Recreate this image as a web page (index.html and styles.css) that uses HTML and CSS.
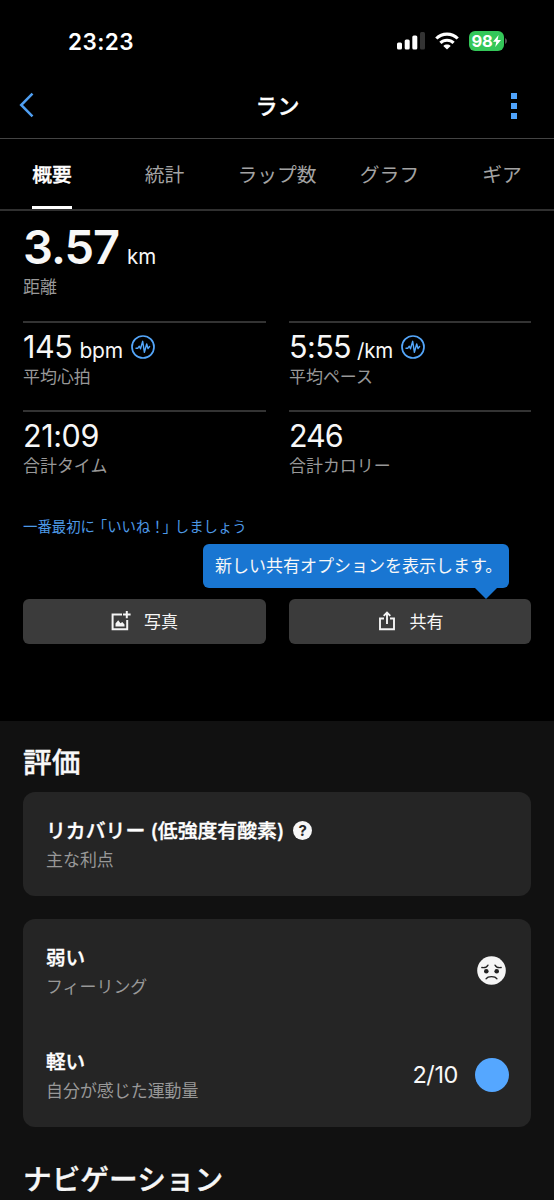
FILE: index.html
```html
<!DOCTYPE html>
<html lang="ja">
<head>
<meta charset="utf-8">
<title>ラン</title>
<link rel="stylesheet" href="styles.css">
</head>
<body>
<div class="app">
  <div class="status">
    <span class="time">23:23</span>
    <div class="status-icons">
      <svg width="28" height="18" viewBox="0 0 28 18"><g fill="#fff"><rect x="0" y="10.5" width="5" height="7" rx="1.5"/><rect x="7.7" y="7.5" width="5" height="10" rx="1.5"/><rect x="15.3" y="3.5" width="5" height="14" rx="1.5"/><rect x="23" y="0" width="5" height="17.5" rx="1.5" fill="#333"/></g></svg>
      <svg class="wifi" width="24" height="18" viewBox="0 0 24 18"><g fill="none" stroke="#fff" stroke-width="3.1"><path d="M1.3 6.5C7.1.6 16.9.6 22.7 6.5"/><path d="M5.4 10.9C9 7.4 15 7.4 18.6 10.9"/></g><path d="M12 17.6 8.3 13.9C10.3 12.1 13.7 12.1 15.7 13.9Z" fill="#fff"/></svg>
      <div class="battery"><span>98</span><svg width="8" height="12" viewBox="0 0 8 12"><path d="M5.6 0 0 6.8H3.3L2.2 12 8 5H4.6Z" fill="#fff"/></svg></div>
      <svg class="nub" width="2" height="6" viewBox="0 0 2 6"><path d="M0 0Q2 .8 2 3T0 6Z" fill="#555"/></svg>
    </div>
  </div>
  <header class="nav">
    <svg width="16" height="26" viewBox="0 0 16 26"><path d="M13.5 1.7 2.2 13 13.5 24.3" fill="none" stroke="#4f9ff2" stroke-width="2.5"/></svg>
    <h1>ラン</h1>
    <svg class="more" width="6" height="26" viewBox="0 0 6 26"><path d="M0 0h6v6H0zM0 10h6v6H0zM0 20h6v6H0z" fill="#4fa3fa"/></svg>
  </header>
  <nav class="tabs">
    <span class="tab active">概要</span><span class="tab">統計</span><span class="tab">ラップ数</span><span class="tab">グラフ</span><span class="tab">ギア</span>
  </nav>
  <main class="summary">
    <section class="distance">
      <div class="value big">3.57<span class="unit">km</span></div>
      <div class="label">距離</div>
    </section>
    <section class="stats">
      <div class="stat">
        <div class="value">145<span class="unit">bpm</span><svg class="pulse" width="24" height="24" viewBox="0 0 24 24"><g fill="none" stroke="#54a6fa"><circle cx="12" cy="12" r="11" stroke-width="1.7"/><path d="M5 13.3H6.7L8.3 11.2 9.5 13.8 11.7 6.3 13.4 17.3 15.7 9 17 13.6 18.6 11.5" stroke-width="1.4" stroke-linejoin="round" stroke-linecap="round"/></g></svg></div>
        <div class="label">平均心拍</div>
      </div>
      <div class="stat">
        <div class="value pace">5:55<span class="unit">/km</span><svg class="pulse" width="24" height="24" viewBox="0 0 24 24"><g fill="none" stroke="#54a6fa"><circle cx="12" cy="12" r="11" stroke-width="1.7"/><path d="M5 13.3H6.7L8.3 11.2 9.5 13.8 11.7 6.3 13.4 17.3 15.7 9 17 13.6 18.6 11.5" stroke-width="1.4" stroke-linejoin="round" stroke-linecap="round"/></g></svg></div>
        <div class="label">平均ペース</div>
      </div>
      <div class="stat">
        <div class="value">21:09</div>
        <div class="label">合計タイム</div>
      </div>
      <div class="stat">
        <div class="value calories">246</div>
        <div class="label">合計カロリー</div>
      </div>
    </section>
    <a class="like">一番最初<span class="tight">に</span>「いいね<span class="tight">！」</span>しましょう</a>
    <div class="actions">
      <div class="button">
        <svg width="20" height="20" viewBox="0 0 20 20"><path d="M11 3.5H1.6V18.3H16.2V9" fill="none" stroke="#f4f4f4" stroke-width="2"/><path d="M15.8 0V7.2M12 3.6H19.6" stroke="#f4f4f4" stroke-width="2"/><path d="M4.5 15.5V12.6L7.2 9.3 9.5 12.2 11.3 10.9 13.5 13.5V15.5Z" fill="#f4f4f4"/></svg>
        <span>写真</span>
      </div>
      <div class="button share">
        <svg width="16" height="20" viewBox="0 0 16 20"><path d="M5 7.5H1V18.2H15V7.5H11M8 13V2M4.7 4.9 8 1.6 11.3 4.9" fill="none" stroke="#f4f4f4" stroke-width="1.9"/></svg>
        <span>共有</span>
        <div class="tooltip">新しい共有オプションを表示します。</div>
      </div>
    </div>
  </main>
  <section class="rating">
    <h2>評価</h2>
    <div class="card">
      <div class="row">
        <div>
          <div class="title benefit">リカバリー (低強度有酸素)<span class="help">?</span></div>
          <div class="label">主な利点</div>
        </div>
      </div>
    </div>
    <div class="card">
      <div class="row">
        <div>
          <div class="title">弱い</div>
          <div class="label">フィーリング</div>
        </div>
        <svg class="face" width="29" height="29" viewBox="0 0 29 29"><circle cx="14.5" cy="14.5" r="14.3" fill="#f5f5f5"/><g fill="#222"><circle cx="9.3" cy="15.3" r="2.3"/><circle cx="19.7" cy="15.3" r="2.3"/></g><g fill="none" stroke="#222" stroke-width="1.3" stroke-linecap="round"><path d="M4.8 11.5C7.8 12 9.8 11.3 11 9.1M24.2 11.5C21.2 12 19.2 11.3 18 9.1"/><path d="M9 22.8C11 19.9 18 19.9 20 22.8"/></g></svg>
      </div>
      <div class="row">
        <div>
          <div class="title">軽い</div>
          <div class="label">自分が感じた運動量</div>
        </div>
        <div class="effort">2/10<span class="dot"></span></div>
      </div>
    </div>
    <h2 class="next">ナビゲーション</h2>
  </section>
</div>
</body>
</html>
```
FILE: styles.css
```css
* { box-sizing: border-box; }
html, body { margin: 0; background: #000; }
.app {
  width: 554px;
  height: 1200px;
  overflow: hidden;
  color: #f7f7f7;
  font-family: Inter, "Noto Sans CJK JP", sans-serif;
}
svg { display: block; flex: none; }
.status {
  display: flex;
  justify-content: space-between;
  height: 72px;
  padding: 26px 47px 0 68px;
}
.time { font-size: 22.5px; font-weight: 600; line-height: 31px; letter-spacing: .4px; color: #fff; }
.status-icons { display: flex; align-items: center; height: 30px; }
.wifi { margin-left: 10px; }
.battery {
  display: flex;
  align-items: center;
  justify-content: center;
  gap: 1px;
  width: 35px;
  height: 20px;
  margin-left: 10px;
  border-radius: 6px;
  background: #34c759;
  color: #fff;
  font-size: 16.5px;
  font-weight: 700;
  letter-spacing: -.3px;
}
.nub { margin-left: 1px; }
.nav {
  display: flex;
  align-items: center;
  justify-content: space-between;
  height: 67px;
  padding: 0 37px 0 19px;
  border-bottom: 1px solid #444;
}
.nav h1 { margin: 2px 0 0 9px; font-size: 22px; line-height: 30px; font-weight: 500; color: #fff; }
.nav h1, .tab.active, h2, .title { -webkit-text-stroke: .35px currentColor; }
.more { margin-top: 1px; }
.tabs {
  display: grid;
  grid-template-columns: repeat(5, 112.5px);
  justify-content: center;
  justify-items: center;
  height: 72px;
  border-bottom: 2px solid #303030;
}
.tab { height: 70px; font-size: 19.8px; line-height: 72px; color: #a3a3a3; }
.tab.active { border-bottom: 3px solid #fff; color: #fff; font-weight: 500; }
.summary { height: 510px; padding: 11px 23px 0; }
.distance { height: 99px; }
.value {
  display: flex;
  align-items: baseline;
  height: 41px;
  font-size: 30.5px;
  line-height: 48px;
  letter-spacing: -.4px;
}
.unit { margin-left: 7px; font-size: 21px; letter-spacing: -.2px; }
.pace { letter-spacing: -.6px; }
.pace .unit { margin-left: 6px; font-size: 20.5px; }
.calories { letter-spacing: -1px; }
.big { height: 52px; font-size: 47px; font-weight: 600; line-height: 50px; letter-spacing: -1px; }
.big .unit { margin-left: 8px; font-weight: 400; font-size: 20.5px; }
.pulse { align-self: flex-start; margin: 12px 0 0 8px; }
.label { font-size: 16.95px; line-height: 26px; color: #989898; }
.stats { display: grid; grid-template-columns: 243px 242px; column-gap: 23px; }
.stat { height: 89px; border-top: 2px solid #333; }
.like {
  display: block;
  margin-top: 17px;
  font-size: 14.4px;
  line-height: 22px;
  color: #4d98e5;
}
.tight { letter-spacing: -2.2px; }
.actions { display: grid; grid-template-columns: 243px 242px; column-gap: 23px; margin-top: 61px; }
.button {
  position: relative;
  display: flex;
  align-items: center;
  justify-content: center;
  gap: 13px;
  height: 45px;
  padding-bottom: 2px;
  border-radius: 6px;
  background: #3b3b3b;
  font-size: 17px;
}
.share { gap: 15px; padding-left: 2px; }
.tooltip {
  position: absolute;
  right: 22px;
  bottom: 56px;
  width: 306px;
  height: 44px;
  padding-left: 12px;
  border-radius: 6px;
  background: #1976d2;
  line-height: 44px;
  white-space: nowrap;
}
.tooltip::after {
  content: "";
  position: absolute;
  right: 11px;
  top: 43px;
  border: 12px solid transparent;
  border-top-color: #1976d2;
  border-bottom: 0;
}
.rating { height: 479px; padding: 20px 23px 0; background: #111; }
h2 { margin: 0 0 7px; font-size: 28.7px; font-weight: 500; line-height: 44px; }
.card { width: 508px; margin-bottom: 23px; border-radius: 12px; background: #252525; }
.row { display: flex; align-items: center; justify-content: space-between; height: 104px; padding: 0 22px 1px 23px; }
.title { display: flex; align-items: center; font-size: 19.6px; font-weight: 500; line-height: 32px; color: #fff; }
.benefit { font-size: 19.85px; }
.help {
  width: 19px;
  height: 19px;
  margin-left: 9px;
  border-radius: 50%;
  background: #f7f7f7;
  color: #252525;
  font-size: 15px;
  font-weight: 700;
  line-height: 19px;
  text-align: center;
  -webkit-text-stroke: 0;
}
.face { margin-right: 3px; }
.effort { display: flex; align-items: center; gap: 17px; font-size: 23.5px; letter-spacing: -.4px; }
.dot { width: 34px; height: 34px; border-radius: 50%; background: #55a7ff; }
.next { margin-top: 31px; }
```
